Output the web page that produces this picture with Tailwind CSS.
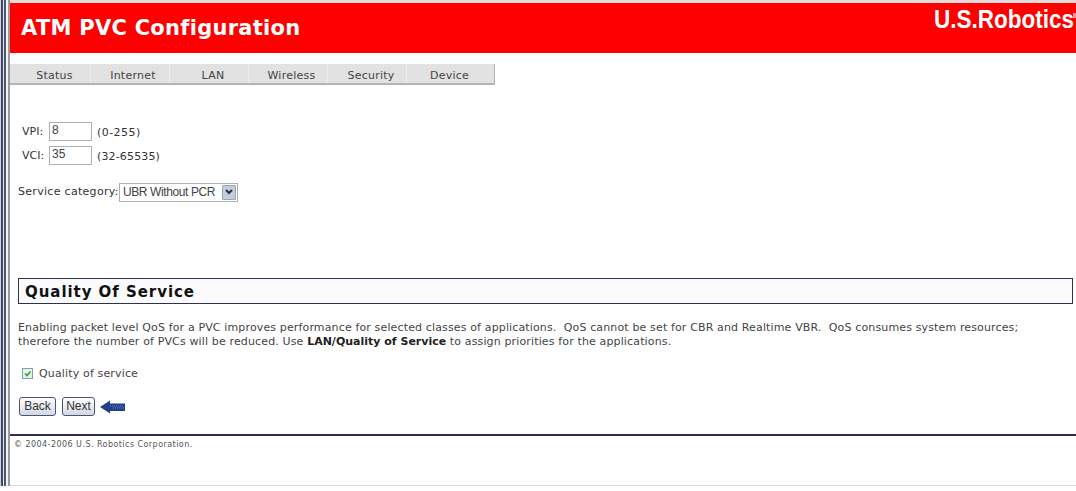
<!DOCTYPE html>
<html><head><meta charset="utf-8"><title>ATM PVC Configuration</title>
<script src="https://cdn.jsdelivr.net/npm/@tailwindcss/browser@4"></script></head>
<body class="bg-white overflow-hidden">
<div class="w-[1076px] h-[491px] flex flex-col font-['DejaVu_Sans',sans-serif] text-[#333] overflow-hidden">
  <div class="flex h-[486px]">
    <div class="w-[10px] shrink-0 flex">
      <div class="w-[1px] bg-[#cfd3da]"></div>
      <div class="w-[2px] bg-[#3d4a6b]"></div>
      <div class="w-[1px] bg-[#e8e8e8]"></div>
      <div class="w-[2px] bg-[#4d5870]"></div>
      <div class="w-[2px] bg-[#f4f4f4]"></div>
      <div class="w-[2px] bg-[#9a9a9a]"></div>
    </div>
    <div class="flex-1 min-w-0 flex flex-col border-b border-[#d8d8d8]">
      <div class="h-[3px] bg-[#e4dcdc]"></div>
      <header class="h-[50px] bg-[#fe0000] flex items-start justify-between">
        <h1 class="ml-[11px] mt-[11px] text-white font-bold text-[21px] leading-[28px] tracking-[0.27px]">ATM PVC Configuration</h1>
        <div class="flex items-start mt-[2px] mr-0">
          <div class="w-[139px] origin-left scale-x-[0.9] text-white font-['Liberation_Sans',sans-serif] font-bold text-[25px] leading-[28px] whitespace-nowrap">U.S.Robotics</div>
          <div class="w-[3px] h-[5px] mt-[8px] bg-white/60"></div>
        </div>
      </header>
      <nav class="mt-[11px] w-[485px] h-[21px] flex items-center bg-[#e2e2e2] border-b-2 border-r border-[#b4b4b4] text-[11px] tracking-[0.25px] text-[#444]">
        <span class="w-[81px] h-full pt-[4px] pl-[9px] text-center border-r border-[#eeeeee]">Status</span>
        <span class="w-[79px] h-full pt-[4px] pl-[6px] text-center border-r border-[#eeeeee]">Internet</span>
        <span class="w-[79px] h-full pt-[4px] pl-[8px] text-center border-r border-[#eeeeee]">LAN</span>
        <span class="w-[79px] h-full pt-[4px] pl-[7px] text-center border-r border-[#eeeeee]">Wireless</span>
        <span class="w-[79px] h-full pt-[4px] pl-[8px] text-center border-r border-[#eeeeee]">Security</span>
        <span class="w-[79px] h-full pt-[4px] pl-[6px] text-center">Device</span>
      </nav>
      <div class="ml-[12px] mt-[37px] flex items-center h-[19px] text-[11px]">
        <span class="w-[27px] mt-[2px]">VPI:</span>
        <span class="w-[43px] h-[19px] border border-[#a9b0b8] pl-[2px] font-['Liberation_Sans',sans-serif] text-[12px] leading-[15px] text-[#444]">8</span>
        <span class="ml-[5px] mt-[4px] tracking-[0.45px]">(0-255)</span>
      </div>
      <div class="ml-[12px] mt-[5px] flex items-center h-[19px] text-[11px]">
        <span class="w-[27px] mt-[1px]">VCI:</span>
        <span class="w-[43px] h-[19px] border border-[#a9b0b8] pl-[2px] font-['Liberation_Sans',sans-serif] text-[12px] leading-[15px] text-[#444]">35</span>
        <span class="ml-[5px] mt-[3px] tracking-[0.15px]">(32-65535)</span>
      </div>
      <div class="ml-[8px] mt-[17px] flex items-center h-[20px] text-[11px] tracking-[0.3px]">
        <span class="w-[101px] whitespace-nowrap">Service category:</span>
        <span class="w-[119px] h-[19px] border border-[#a9b0b8] flex items-center justify-between pl-[3px] pr-[1px] font-['Liberation_Sans',sans-serif] text-[12px] tracking-[-0.4px] text-[#444]">UBR Without PCR
          <span class="w-[14px] h-[15px] bg-[#c3cddb] border border-[#9aa4b4] rounded-[1px] flex items-center justify-center">
            <svg width="8" height="6" viewBox="0 0 8 6"><path d="M1 1l3 3 3-3" fill="none" stroke="#27324d" stroke-width="2"/></svg>
          </span>
        </span>
      </div>
      <h2 class="ml-[8px] mt-[76px] w-[1055px] h-[26px] border border-[#2c3350] pl-[6px] bg-[#fbfbfe] text-[#111] font-bold text-[15px] leading-[26px] tracking-[0.95px]">Quality Of Service</h2>
      <p class="ml-[8px] mt-[17px] w-[1050px] text-[11px] leading-[14px] tracking-[0.14px] text-[#444] whitespace-pre">Enabling packet level QoS for a PVC improves performance for selected classes of applications.  QoS cannot be set for CBR and Realtime VBR.  QoS consumes system resources;
therefore the number of PVCs will be reduced. Use <b class="text-[#222] tracking-[0px]">LAN/Quality of Service</b> to assign priorities for the applications.</p>
      <div class="ml-[12px] mt-[17px] flex items-center h-[14px] text-[11px] tracking-[0.15px] text-[#444]">
        <span class="w-[11px] h-[11px] border border-[#7f9db9] bg-[#e6f3e3] flex items-center justify-center">
          <svg width="9" height="9" viewBox="0 0 9 9"><path d="M2 4.5l2 2 3.500-4" fill="none" stroke="#2f9e44" stroke-width="1.600"/></svg>
        </span>
        <span class="ml-[6px] mt-[2px]">Quality of service</span>
      </div>
      <div class="ml-[9px] mt-[17px] flex items-center h-[19px] font-['Liberation_Sans',sans-serif] text-[12px] text-[#333]">
        <span class="w-[37px] h-[19px] border border-[#4a5670] rounded-[3px] bg-gradient-to-b from-white to-[#d4d8e6] text-center leading-[17px]">Back</span>
        <span class="ml-[6px] w-[33px] h-[19px] border border-[#4a5670] rounded-[3px] bg-gradient-to-b from-white to-[#d4d8e6] text-center leading-[17px]">Next</span>
        <svg class="ml-[5px]" width="26" height="14" viewBox="0 0 26 14"><path d="M0 7L10 0.500V3.500H25V11H10V13.500Z" fill="#23408c"/><path d="M10 6h14M13 8h11" stroke="#6f86c0" stroke-width="1" stroke-dasharray="1 1"/></svg>
      </div>
      <div class="mt-[18px] h-[2px] bg-[#2e2d55]"></div>
      <p class="ml-[4px] mt-[3px] text-[8px] leading-[12px] tracking-[0.45px] text-[#555]">© 2004-2006 U.S. Robotics Corporation.</p>
    </div>
  </div>
</div>
</body></html>
